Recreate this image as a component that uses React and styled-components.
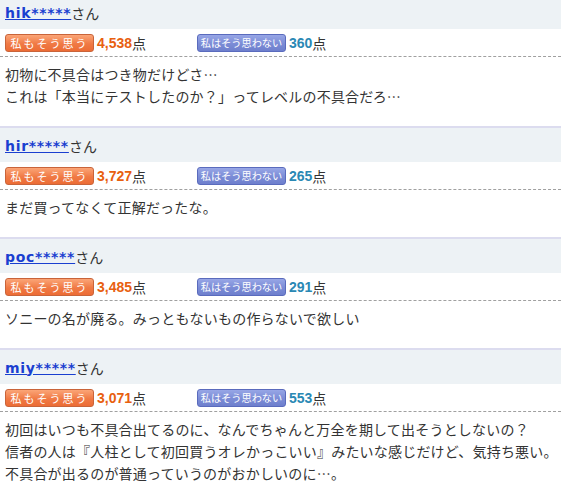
import React from 'react';
import styled, {createGlobalStyle} from 'styled-components';

const GlobalStyle = createGlobalStyle`
  body {
    margin: 0;
    background: #fff;
    font-family: "Noto Sans CJK JP", "Liberation Sans", sans-serif;
    color: #333;
    overflow: hidden;
  }
`;

const List = styled.div`
  margin-top: -7px;
  width: 561px;
`;

const Comment = styled.div`
  border-top: 2px solid #dcdcef;
`;

const Header = styled.div`
  height: 34px;
  background: #edf2f5;
  display: flex;
  align-items: center;
  padding-left: 5px;
  padding-top: 1px;
  box-sizing: border-box;
`;

const User = styled.a`
  font-family: "DejaVu Sans", sans-serif;
  font-weight: bold;
  font-size: 14px;
  letter-spacing: 0.7px;
  color: #1a3fd0;
  text-decoration: underline;
`;

const San = styled.span`
  font-size: 14px;
  color: #333;
`;

const Votes = styled.div`
  height: 28px;
  display: flex;
  align-items: center;
  padding-left: 5px;
  border-bottom: 1px dashed #a0a0a0;
  box-sizing: border-box;
  padding-top: 1px;
`;

const Group = styled.div`
  display: flex;
  align-items: center;
  width: ${p => p.$width || 'auto'};
`;

const VoteButton = styled.button`
  width: 89px;
  height: 18px;
  padding: 0;
  border-radius: 3px;
  border: 1px solid ${p => (p.$agree ? '#c9643a' : '#5a6bbd')};
  background: ${p =>
    p.$agree
      ? 'linear-gradient(#fba577, #f07a45 55%, #ec6c35)'
      : 'linear-gradient(#97a6e6, #7b8cd6 55%, #6e7fcd)'};
  color: #fff;
  font-family: "Noto Sans CJK JP", sans-serif;
  font-size: ${p => (p.$agree ? '11px' : '10.2px')};
  line-height: 16px;
  white-space: nowrap;
  overflow: hidden;
  letter-spacing: ${p => (p.$agree ? '2px' : '0')};
  cursor: pointer;
`;

const Score = styled.span`
  margin-left: 3px;
  font-family: "Liberation Sans", sans-serif;
  font-weight: bold;
  font-size: 14px;
  color: ${p => (p.$agree ? '#e8600f' : '#2a88b4')};
`;

const Unit = styled.span`
  font-size: 14px;
  color: #333;
`;

const Body = styled.div`
  padding: 6px 0 19px 5px;
  font-size: 14px;
  line-height: 22px;
  letter-spacing: 0.2px;
  color: #333;
  white-space: nowrap;
`;

const comments = [
  {
    user: 'hik*****',
    yes: '4,538',
    no: '360',
    lines: ['初物に不具合はつき物だけどさ…', 'これは「本当にテストしたのか？」ってレベルの不具合だろ…'],
  },
  {
    user: 'hir*****',
    yes: '3,727',
    no: '265',
    lines: ['まだ買ってなくて正解だったな。'],
  },
  {
    user: 'poc*****',
    yes: '3,485',
    no: '291',
    lines: ['ソニーの名が廃る。みっともないもの作らないで欲しい'],
  },
  {
    user: 'miy*****',
    yes: '3,071',
    no: '553',
    lines: [
      '初回はいつも不具合出てるのに、なんでちゃんと万全を期して出そうとしないの？',
      '信者の人は『人柱として初回買うオレかっこいい』みたいな感じだけど、気持ち悪い。',
      '不具合が出るのが普通っていうのがおかしいのに…。',
    ],
  },
];

const App = () => {
  return (
    <>
      <GlobalStyle />
      <List>
        {comments.map(c => (
          <Comment key={c.user}>
            <Header>
              <User href="#">{c.user}</User>
              <San>さん</San>
            </Header>
            <Votes>
              <Group $width="192px">
                <VoteButton $agree>私もそう思う</VoteButton>
                <Score $agree>{c.yes}</Score>
                <Unit>点</Unit>
              </Group>
              <Group>
                <VoteButton>私はそう思わない</VoteButton>
                <Score>{c.no}</Score>
                <Unit>点</Unit>
              </Group>
            </Votes>
            <Body>
              {c.lines.map((l, i) => (
                <div key={i}>{l}</div>
              ))}
            </Body>
          </Comment>
        ))}
      </List>
    </>
  );
};

export default App;
